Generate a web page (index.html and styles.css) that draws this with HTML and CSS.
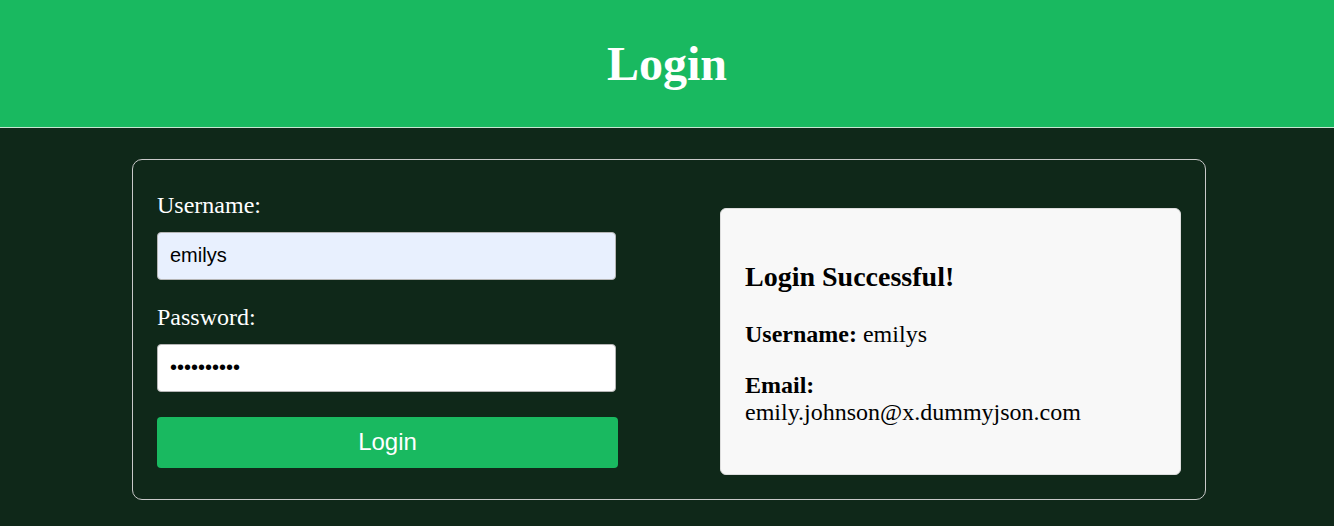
FILE: index.html
```html
<!DOCTYPE html>
<html lang="en">
<head>
    <meta charset="UTF-8">
    <meta name="viewport" content="width=device-width, initial-scale=1.0">
    <title>Login</title>
    <link rel="stylesheet" href="styles.css">
</head>
<body>
    <header>
        <h1>Login</h1>
    </header>

    <div class="container">
        <form class="login-form">
            <label for="username">Username:</label>
            <input type="text" id="username" class="filled" value="emilys">

            <label for="password">Password:</label>
            <input type="password" id="password" value="emilyspass">

            <button type="submit">Login</button>
        </form>

        <div class="result">
            <h3>Login Successful!</h3>
            <p><strong>Username:</strong> emilys</p>
            <p><strong>Email:</strong><br>emily.johnson@x.dummyjson.com</p>
        </div>
    </div>
</body>
</html>
```

FILE: styles.css
```css
body {
    font-family: "Liberation Serif", "Times New Roman", serif;
    font-size: 24px;
    margin: 0;
    padding: 0;
    background-color: #0f2819;
    color: #fff;
}

header {
    background-color: #19b960;
    border-bottom: 1px solid #c8e6d2;
    padding: 36px 0;
    text-align: center;
}

header h1 {
    margin: 0;
    font-size: 48px;
}

.container {
    width: 1074px;
    box-sizing: border-box;
    margin: 31px 0 0 132px;
    padding: 24px;
    border: 1px solid #c9c9c9;
    border-radius: 10px;
    display: grid;
    grid-template-columns: 1fr 1fr;
    column-gap: 102px;
    align-items: center;
}

.login-form label {
    display: block;
    margin-bottom: 13px;
}

.login-form input {
    display: block;
    width: calc(100% - 2px);
    height: 48px;
    box-sizing: border-box;
    margin: 0 0 24px;
    padding: 0 12px;
    border: 1px solid #b5b5b5;
    border-radius: 4px;
    background-color: #fff;
    color: #000;
    font-family: "Liberation Sans", Arial, sans-serif;
    font-size: 20px;
}

.login-form input.filled {
    background-color: #e8f0fe;
}

.login-form button {
    display: block;
    width: 100%;
    height: 51px;
    margin-top: 25px;
    border: none;
    border-radius: 4px;
    background-color: #19b960;
    color: #fff;
    font-family: "Liberation Sans", Arial, sans-serif;
    font-size: 24px;
}

.result {
    margin-top: 24px;
    padding: 24px;
    background-color: #f8f8f8;
    border: 1px solid #ddd;
    border-radius: 6px;
    color: #000;
}

.result h3 {
    font-size: 28px;
    margin: 28px 0;
}

.result p {
    margin: 24px 0;
}
```
